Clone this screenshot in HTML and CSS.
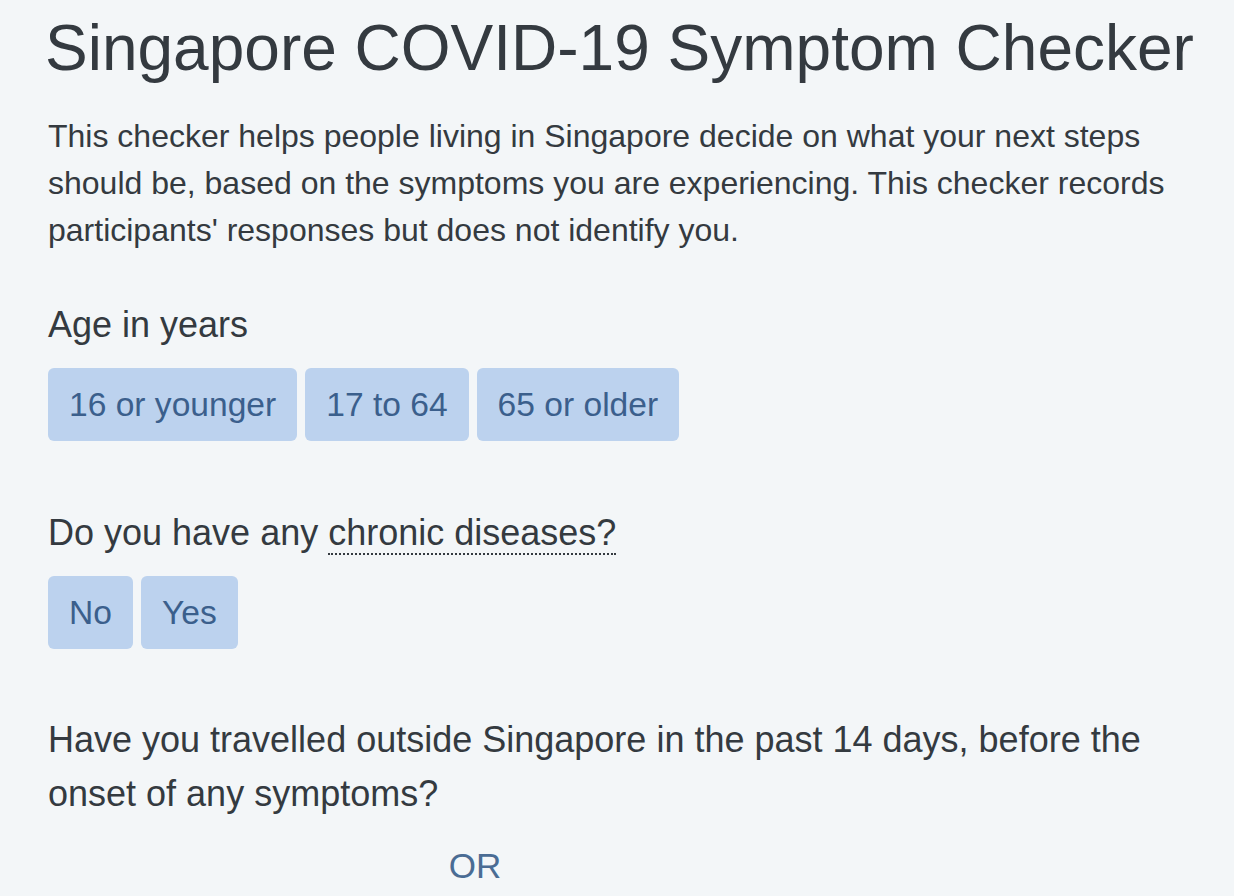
FILE: index.html
```html
<!DOCTYPE html>
<html lang="en">
<head>
<meta charset="utf-8">
<title>Singapore COVID-19 Symptom Checker</title>
<link rel="stylesheet" href="styles.css">
</head>
<body>
<main class="page">
  <h1 class="title">Singapore COVID-19 Symptom Checker</h1>
  <p class="intro">This checker helps people living in Singapore decide on what your next steps should be, based on the symptoms you are experiencing. This checker records participants' responses but does not identify you.</p>

  <section class="question">
    <p class="label">Age in years</p>
    <div class="options">
      <button class="opt">16 or younger</button>
      <button class="opt">17 to 64</button>
      <button class="opt">65 or older</button>
    </div>
  </section>

  <section class="question">
    <p class="label">Do you have any <span class="term">chronic diseases?</span></p>
    <div class="options">
      <button class="opt">No</button>
      <button class="opt">Yes</button>
    </div>
  </section>

  <section class="question travel">
    <p class="label">Have you travelled outside Singapore in the past 14 days, before the onset of any symptoms?</p>
    <div class="or">OR</div>
  </section>
</main>
</body>
</html>
```

FILE: styles.css
```css
html, body {
  margin: 0;
  padding: 0;
  background: #f3f6f8;
}
body {
  font-family: "Liberation Sans", Arial, Helvetica, sans-serif;
  color: #343a40;
  height: 896px;
  overflow: hidden;
}
.page {
  padding: 10px 48px 0 48px;
  width: 1110px;
}
.title {
  margin: 0;
  font-size: 64px;
  font-weight: 400;
  line-height: 76px;
  margin-left: -3px;
  white-space: nowrap;
}
.intro {
  margin: 27px 0 0 0;
  font-size: 32px;
  line-height: 47px;
  width: 1125px;
}
.question {
  margin-top: 44px;
}
.label {
  margin: 0;
  font-size: 36px;
  line-height: 54px;
}
.term {
  border-bottom: 2px dotted #343a40;
}
.options {
  display: flex;
  gap: 8px;
  margin-top: 16px;
}
.opt {
  font-family: inherit;
  font-size: 33.6px;
  line-height: 73px;
  height: 73px;
  padding: 0 21px;
  border: none;
  border-radius: 6px;
  background: #bcd2ee;
  color: #3b5f8c;
  cursor: pointer;
}
.question + .question {
  margin-top: 65px;
}
.question.travel {
  margin-top: 64px;
}
.or {
  width: 854px;
  text-align: center;
  font-size: 35px;
  line-height: 54px;
  margin-top: 18px;
  color: #4a6c94;
}
```
